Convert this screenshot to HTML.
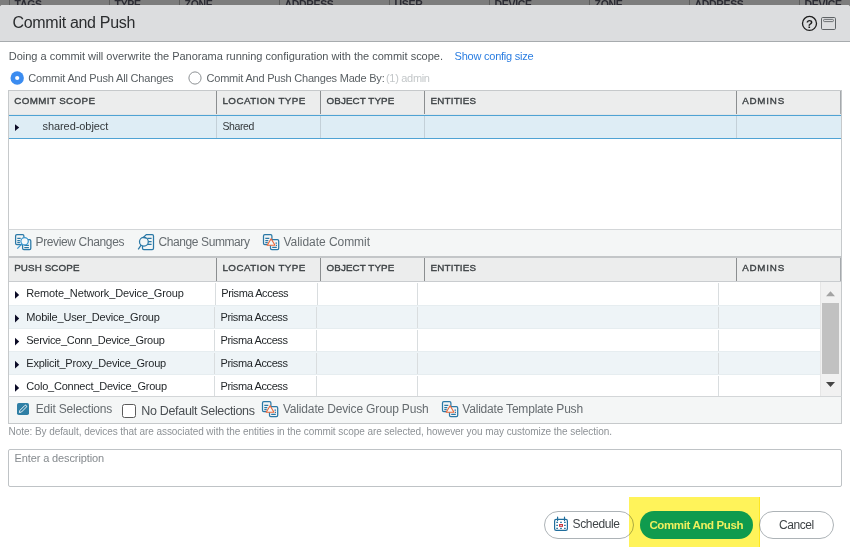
<!DOCTYPE html>
<html><head><meta charset="utf-8">
<style>
*{box-sizing:border-box;margin:0;padding:0}
html,body{width:850px;height:551px;overflow:hidden;background:#7d7d7d;font-family:"Liberation Sans",sans-serif}
body{position:relative}
.a{position:absolute}
.x{position:absolute;white-space:nowrap;line-height:1}
#bg span{position:absolute;top:-.6px;font-size:10.5px;line-height:1;font-weight:bold;letter-spacing:-.35px;color:#2b2b33;margin-left:-.4px}
#bg i{position:absolute;top:0;width:1px;height:5px;background:#5c5c5c}
.hs{position:absolute;width:1px;height:23px;background:#8b8e90}
.vs{position:absolute;width:1px;background:#d9dddf}
.tri{position:absolute;width:0;height:0;border-left:4px solid #0c0c28;border-top:3.8px solid transparent;border-bottom:3.8px solid transparent}
</style></head><body>
<div id="bg">
<i style="left:9px"></i><span style="left:15px">TAGS</span>
<i style="left:109px"></i><span style="left:115px">TYPE</span>
<i style="left:179px"></i><span style="left:185px">ZONE</span>
<i style="left:279px"></i><span style="left:285px">ADDRESS</span>
<i style="left:389px"></i><span style="left:395px">USER</span>
<i style="left:489px"></i><span style="left:495px">DEVICE</span>
<i style="left:589px"></i><span style="left:595px">ZONE</span>
<i style="left:689px"></i><span style="left:695px">ADDRESS</span>
<i style="left:799px"></i><span style="left:805px">DEVICE</span>
</div>
<!-- dialog -->
<div class="a" style="left:0;top:5px;width:850px;height:546px;background:#fff;border-radius:3px 3px 0 0"></div>
<div class="a" style="left:0;top:5px;width:850px;height:37px;background:#dcdddf;border-bottom:1px solid #a7abae;border-radius:3px 3px 0 0"></div>
<!-- header icons -->
<svg class="a" style="left:798px;top:12px" width="44" height="24" viewBox="798 12 44 24">
 <circle cx="809.5" cy="23.4" r="7" fill="none" stroke="#1c1c1c" stroke-width="1.3"/>
 <text x="809.5" y="27.6" font-size="11.5" font-weight="bold" font-family="Liberation Sans, sans-serif" text-anchor="middle" fill="#1c1c1c">?</text>
 <rect x="821.5" y="17.5" width="14" height="12" rx="1.2" fill="none" stroke="#5f6366" stroke-width="1"/>
 <rect x="823.6" y="19.4" width="9.8" height="2.2" rx=".8" fill="none" stroke="#5f6366" stroke-width=".9"/>
</svg>
<!-- radios -->
<svg class="a" style="left:10px;top:71px" width="14" height="14"><circle cx="7.2" cy="7" r="6.7" fill="#3b8cf0"/><circle cx="7.2" cy="7" r="2.1" fill="#fff"/></svg>
<svg class="a" style="left:188px;top:71px" width="14" height="14"><circle cx="7" cy="7" r="6.1" fill="#fff" stroke="#8d9194" stroke-width="1"/></svg>

<!-- commit grid -->
<div class="a" style="left:8px;top:90px;width:834px;height:140px;border:1px solid #c6c9cb;border-bottom:0;background:#fff"></div>
<div class="a" style="left:9px;top:91px;width:832px;height:23px;background:#eceded"></div>
<div class="hs" style="left:216px;top:91px"></div><div class="hs" style="left:320px;top:91px"></div><div class="hs" style="left:424px;top:91px"></div><div class="hs" style="left:736px;top:91px"></div><div class="hs" style="left:840px;top:91px;background:#a5a9ad"></div>
<div class="a" style="left:9px;top:114px;width:832px;height:1px;background:#e3e6e7"></div>
<div class="a" style="left:9px;top:115px;width:832px;height:24px;background:#deedf5;border-top:1px solid #4fa3d4;border-bottom:1px solid #4fa3d4"></div>
<div class="vs" style="left:216px;top:116px;height:22px;background:#c3d0d8"></div><div class="vs" style="left:320px;top:116px;height:22px;background:#c3d0d8"></div><div class="vs" style="left:424px;top:116px;height:22px;background:#c3d0d8"></div><div class="vs" style="left:736px;top:116px;height:22px;background:#c3d0d8"></div>

<!-- toolbar 1 -->
<div class="a" style="left:8px;top:229px;width:834px;height:27px;background:#f4f6f6;border:1px solid #c6c9cb;border-top-color:#d3d6d8;border-bottom:0"></div>


<!-- push grid -->
<div class="a" style="left:8px;top:256px;width:834px;height:141px;border:1px solid #c6c9cb;border-top:2px solid #c3c6c8;background:#fff"></div>
<div class="a" style="left:9px;top:258px;width:832px;height:23px;background:#eceded"></div>
<div class="a" style="left:9px;top:281px;width:832px;height:1px;background:#c9cccf"></div>
<div class="hs" style="left:216px;top:258px;height:23px"></div><div class="hs" style="left:320px;top:258px;height:23px"></div><div class="hs" style="left:424px;top:258px;height:23px"></div><div class="hs" style="left:736px;top:258px;height:23px"></div><div class="hs" style="left:840px;top:258px;height:23px;background:#a5a9ad"></div>
<!-- rows -->
<div class="a" style="left:9px;top:305px;width:811px;height:24px;background:#eef4f7;border-top:1px solid #e6edf0;border-bottom:1px solid #e6edf0"></div>
<div class="a" style="left:9px;top:351px;width:811px;height:24px;background:#eef4f7;border-top:1px solid #e6edf0;border-bottom:1px solid #e6edf0"></div>
<div class="vs" style="left:215px;top:283px;height:22px"></div><div class="vs" style="left:317px;top:283px;height:22px"></div><div class="vs" style="left:417px;top:283px;height:22px"></div><div class="vs" style="left:718px;top:283px;height:22px"></div><div class="vs" style="left:214px;top:307px;height:21px"></div><div class="vs" style="left:316px;top:307px;height:21px"></div><div class="vs" style="left:417px;top:307px;height:21px"></div><div class="vs" style="left:718px;top:307px;height:21px"></div><div class="vs" style="left:214px;top:330px;height:21px"></div><div class="vs" style="left:316px;top:330px;height:21px"></div><div class="vs" style="left:417px;top:330px;height:21px"></div><div class="vs" style="left:718px;top:330px;height:21px"></div><div class="vs" style="left:214px;top:353px;height:21px"></div><div class="vs" style="left:316px;top:353px;height:21px"></div><div class="vs" style="left:417px;top:353px;height:21px"></div><div class="vs" style="left:718px;top:353px;height:21px"></div><div class="vs" style="left:214px;top:376px;height:20px"></div><div class="vs" style="left:316px;top:376px;height:20px"></div><div class="vs" style="left:417px;top:376px;height:20px"></div><div class="vs" style="left:718px;top:376px;height:20px"></div>
<!-- scrollbar -->
<div class="a" style="left:820px;top:282px;width:21px;height:114px;background:#f1f1f1;border-left:1px solid #e6e6e6"></div>
<div class="a" style="left:822px;top:303px;width:17px;height:71px;background:#c1c1c1"></div>

<!-- toolbar 2 -->
<div class="a" style="left:8px;top:396px;width:834px;height:28px;background:#f4f6f6;border:1px solid #c6c9cb;border-top-color:#d3d6d8"></div>
<div class="a" style="left:122px;top:404px;width:14px;height:14px;border:1px solid #5a5a5a;border-radius:2.5px;background:#fff"></div>
<!--ICONS2-->

<!-- textarea -->
<div class="a" style="left:8px;top:449px;width:834px;height:38px;border:1px solid #bfc3c6;border-radius:2px;background:#fff"></div>

<!-- buttons -->
<div class="a" style="left:544px;top:511px;width:90px;height:28px;border:1px solid #adb3b7;border-radius:14px;background:#fff"></div>
<div class="a" style="left:629px;top:497px;width:131px;height:50px;background:#fff35a;mix-blend-mode:multiply"></div>
<div class="a" style="left:640px;top:511px;width:113px;height:28px;border-radius:14px;background:#0f9b4e"></div>
<div class="a" style="left:759px;top:511px;width:75px;height:28px;border:1px solid #adb3b7;border-radius:14px;background:#fff"></div>
<div class="a" style="left:759px;top:497px;width:1px;height:50px;background:#fff35a;mix-blend-mode:multiply"></div>
<svg class="a" style="left:0;top:0" width="850" height="551" viewBox="0 0 850 551">
<g fill="none" stroke="#2a78a6" stroke-width="1.25">
 <rect x="15.6" y="234.6" width="8.3" height="10" rx="1.3"/>
 <path d="M17.3 238.4h3.4M17.3 240.5h2.6M17.3 242.5h2.6"/>
 <rect x="22.6" y="239.6" width="8.2" height="10" rx="1.3"/>
 <path d="M24.3 245.4h4.6M24.3 247.5h4.6"/>
 <circle cx="24.6" cy="241.2" r="3.7" fill="#f6f9fa" stroke="#3c98cf"/>
 <path d="M21.9 243.9L17.3 248.6" stroke="#3c98cf"/>
</g>
<g fill="none" stroke="#2a78a6" stroke-width="1.25">
 <path d="M146.3 234.6H152.2Q153.5 234.6 153.5 235.9V248.3Q153.5 249.6 152.2 249.6H143.8Q142.5 249.6 142.5 248.3V238.2Z"/>
 <path d="M147.2 238.4h4.4M148.3 241.5h3.3M147.2 244.4h4.4"/>
 <circle cx="143.9" cy="241.7" r="4.4" fill="#f4f6f6"/>
 <path d="M141.1 245.2L138.2 249.4"/>
 <path d="M142.6 237.6L146.3 238.2" stroke-width=".9"/>
</g>
<g fill="none" stroke="#2a78a6" stroke-width="1.25">
 <rect x="263.5" y="234.6" width="8.4" height="10" rx="1.3"/>
 <path d="M265.3 238.3h4M265.3 240.5h3M265.3 242.6h2.4"/>
 <rect x="270.5" y="239.6" width="8.2" height="10" rx="1.3"/>
 <path d="M275.5 243.2h1.5M276 245.3h1M272.2 247.4h4.6"/>
 <path d="M271.1 238.7L275 245.2H267.2Z" fill="#f3f8f9" stroke="#e9693d" stroke-width="1.15" stroke-linejoin="round"/>
</g>
<g transform="translate(-1,167)" fill="none" stroke="#2a78a6" stroke-width="1.25">
 <rect x="263.5" y="234.6" width="8.4" height="10" rx="1.3"/>
 <path d="M265.3 238.3h4M265.3 240.5h3M265.3 242.6h2.4"/>
 <rect x="270.5" y="239.6" width="8.2" height="10" rx="1.3"/>
 <path d="M275.5 243.2h1.5M276 245.3h1M272.2 247.4h4.6"/>
 <path d="M271.1 238.7L275 245.2H267.2Z" fill="#f3f8f9" stroke="#e9693d" stroke-width="1.15" stroke-linejoin="round"/>
</g>
<g transform="translate(179,167)" fill="none" stroke="#2a78a6" stroke-width="1.25">
 <rect x="263.5" y="234.6" width="8.4" height="10" rx="1.3"/>
 <path d="M265.3 238.3h4M265.3 240.5h3M265.3 242.6h2.4"/>
 <rect x="270.5" y="239.6" width="8.2" height="10" rx="1.3"/>
 <path d="M275.5 243.2h1.5M276 245.3h1M272.2 247.4h4.6"/>
 <path d="M271.1 238.7L275 245.2H267.2Z" fill="#f3f8f9" stroke="#e9693d" stroke-width="1.15" stroke-linejoin="round"/>
</g>
<path d="M15 124.3L19.2 127.6L15 130.9Z" fill="#0b0b26"/>
<path d="M15 291.0L19.2 294.9L15 298.8Z" fill="#0b0b26"/>
<path d="M15 314.6L19.2 318.5L15 322.4Z" fill="#0b0b26"/>
<path d="M15 337.7L19.2 341.6L15 345.5Z" fill="#0b0b26"/>
<path d="M15 360.8L19.2 364.7L15 368.6Z" fill="#0b0b26"/>
<path d="M15 384.0L19.2 387.9L15 391.8Z" fill="#0b0b26"/>
<path d="M826 296.3L830.5 291.3L835 296.3Z" fill="#a3a3a3"/>
<path d="M826 382.1L830.5 387.1L835 382.1Z" fill="#454545"/>
<!-- edit icon -->
<rect x="17" y="403" width="12" height="12" rx="1.8" fill="#2f7fa5"/>
<path d="M19.4 412.5L19.9 410.4L24.9 405.4Q25.6 404.9 26.3 405.6Q27 406.3 26.4 407L21.5 412Z" fill="none" stroke="#fff" stroke-width=".9" stroke-linejoin="round"/>
<!-- calendar -->
<g fill="none" stroke="#1f6d9c" stroke-width="1.2">
 <rect x="554.6" y="519.4" width="12.8" height="11" rx="1.6"/>
 <path d="M557.6 517.2v3.4M564.5 517.2v3.4" stroke-linecap="round"/>
 <path d="M556.3 522.4h1.6M560.2 522.4h1.6M564.1 522.4h1.6M556.3 525.4h1.6M564.1 525.4h1.6M556.3 528.4h1.6M560.2 528.4h1.6M564.1 528.4h1.6" stroke-width="1.1"/>
 <rect x="559.6" y="524.55" width="2.9" height="1.75" stroke="#c8323a" stroke-width="1.05" fill="#fff"/>
</g>
</svg>
<div id="title" class="x" style="left:12.50px;top:15.00px;font-size:16px;font-weight:normal;color:#2b2d2f;letter-spacing:-0.305px">Commit and Push</div>
<div id="l1" class="x" style="left:8.80px;top:50.71px;font-size:11px;font-weight:normal;color:#4f5559;letter-spacing:-0.013px">Doing a commit will overwrite the Panorama running configuration with the commit scope.</div>
<div id="l1b" class="x" style="left:454.60px;top:50.71px;font-size:11px;font-weight:normal;color:#2a7de1;letter-spacing:-0.236px">Show config size</div>
<div id="r1" class="x" style="left:28.30px;top:72.80px;font-size:11px;font-weight:normal;color:#5a6064;letter-spacing:-0.174px">Commit And Push All Changes</div>
<div id="r2" class="x" style="left:206.50px;top:72.80px;font-size:11px;font-weight:normal;color:#5a6064;letter-spacing:-0.208px">Commit And Push Changes Made By:</div>
<div id="r2b" class="x" style="left:386.00px;top:72.80px;font-size:11px;font-weight:normal;color:#c3c7c9;letter-spacing:-0.309px">(1) admin</div>
<div id="h1" class="x" style="left:14.20px;top:95.91px;font-size:9.8px;font-weight:normal;color:#3d4245;letter-spacing:0.384px;-webkit-text-stroke:.36px #3d4245">COMMIT SCOPE</div>
<div id="h2" class="x" style="left:222.40px;top:95.91px;font-size:9.8px;font-weight:normal;color:#3d4245;letter-spacing:0.458px;-webkit-text-stroke:.36px #3d4245">LOCATION TYPE</div>
<div id="h3" class="x" style="left:326.50px;top:95.91px;font-size:9.8px;font-weight:normal;color:#3d4245;letter-spacing:0.119px;-webkit-text-stroke:.36px #3d4245">OBJECT TYPE</div>
<div id="h4" class="x" style="left:430.60px;top:95.91px;font-size:9.8px;font-weight:normal;color:#3d4245;letter-spacing:0.187px;-webkit-text-stroke:.36px #3d4245">ENTITIES</div>
<div id="h5" class="x" style="left:742.20px;top:95.91px;font-size:9.8px;font-weight:normal;color:#3d4245;letter-spacing:0.778px;-webkit-text-stroke:.36px #3d4245">ADMINS</div>
<div id="c1" class="x" style="left:42.50px;top:120.91px;font-size:11px;font-weight:normal;color:#33383b;letter-spacing:-0.071px">shared-object</div>
<div id="c2" class="x" style="left:222.40px;top:120.91px;font-size:10.5px;font-weight:normal;color:#33383b;letter-spacing:-0.392px">Shared</div>
<div id="tb1" class="x" style="left:35.50px;top:235.61px;font-size:12px;font-weight:normal;color:#666c70;letter-spacing:-0.362px">Preview Changes</div>
<div id="tb2" class="x" style="left:158.60px;top:235.61px;font-size:12px;font-weight:normal;color:#666c70;letter-spacing:-0.417px">Change Summary</div>
<div id="tb3" class="x" style="left:283.50px;top:235.61px;font-size:12px;font-weight:normal;color:#666c70;letter-spacing:-0.046px">Validate Commit</div>
<div id="p1" class="x" style="left:14.20px;top:263.01px;font-size:9.8px;font-weight:normal;color:#3d4245;letter-spacing:0.117px;-webkit-text-stroke:.36px #3d4245">PUSH SCOPE</div>
<div id="p2" class="x" style="left:222.40px;top:263.01px;font-size:9.8px;font-weight:normal;color:#3d4245;letter-spacing:0.458px;-webkit-text-stroke:.36px #3d4245">LOCATION TYPE</div>
<div id="p3" class="x" style="left:326.50px;top:263.01px;font-size:9.8px;font-weight:normal;color:#3d4245;letter-spacing:0.119px;-webkit-text-stroke:.36px #3d4245">OBJECT TYPE</div>
<div id="p4" class="x" style="left:430.60px;top:263.01px;font-size:9.8px;font-weight:normal;color:#3d4245;letter-spacing:0.187px;-webkit-text-stroke:.36px #3d4245">ENTITIES</div>
<div id="p5" class="x" style="left:742.20px;top:263.01px;font-size:9.8px;font-weight:normal;color:#3d4245;letter-spacing:0.778px;-webkit-text-stroke:.36px #3d4245">ADMINS</div>
<div id="n1" class="x" style="left:26.30px;top:287.50px;font-size:11px;font-weight:normal;color:#1f2326;letter-spacing:-0.151px">Remote_Network_Device_Group</div>
<div id="n2" class="x" style="left:26.30px;top:312.21px;font-size:11px;font-weight:normal;color:#1f2326;letter-spacing:-0.199px">Mobile_User_Device_Group</div>
<div id="n3" class="x" style="left:26.30px;top:335.30px;font-size:11px;font-weight:normal;color:#1f2326;letter-spacing:-0.289px">Service_Conn_Device_Group</div>
<div id="n4" class="x" style="left:26.30px;top:357.50px;font-size:11px;font-weight:normal;color:#1f2326;letter-spacing:-0.216px">Explicit_Proxy_Device_Group</div>
<div id="n5" class="x" style="left:26.30px;top:380.71px;font-size:11px;font-weight:normal;color:#1f2326;letter-spacing:-0.223px">Colo_Connect_Device_Group</div>
<div id="a1" class="x" style="left:221.30px;top:287.50px;font-size:11px;font-weight:normal;color:#1f2326;letter-spacing:-0.403px">Prisma Access</div>
<div id="a2" class="x" style="left:220.50px;top:312.21px;font-size:11px;font-weight:normal;color:#1f2326;letter-spacing:-0.387px">Prisma Access</div>
<div id="a3" class="x" style="left:220.50px;top:335.30px;font-size:11px;font-weight:normal;color:#1f2326;letter-spacing:-0.387px">Prisma Access</div>
<div id="a4" class="x" style="left:220.50px;top:357.50px;font-size:11px;font-weight:normal;color:#1f2326;letter-spacing:-0.387px">Prisma Access</div>
<div id="a5" class="x" style="left:220.50px;top:380.71px;font-size:11px;font-weight:normal;color:#1f2326;letter-spacing:-0.387px">Prisma Access</div>
<div id="e1" class="x" style="left:35.80px;top:402.61px;font-size:12px;font-weight:normal;color:#666c70;letter-spacing:-0.206px">Edit Selections</div>
<div id="e2" class="x" style="left:141.30px;top:405.21px;font-size:12.5px;font-weight:normal;color:#4a4f53;letter-spacing:-0.325px">No Default Selections</div>
<div id="e3" class="x" style="left:282.90px;top:402.80px;font-size:12px;font-weight:normal;color:#666c70;letter-spacing:-0.162px">Validate Device Group Push</div>
<div id="e4" class="x" style="left:462.30px;top:402.80px;font-size:12px;font-weight:normal;color:#666c70;letter-spacing:-0.199px">Validate Template Push</div>
<div id="note" class="x" style="left:8.60px;top:427.30px;font-size:10px;font-weight:normal;color:#8d9296;letter-spacing:-0.063px">Note: By default, devices that are associated with the entities in the commit scope are selected, however you may customize the selection.</div>
<div id="ph" class="x" style="left:14.50px;top:453.21px;font-size:11px;font-weight:normal;color:#858a8e;letter-spacing:-0.118px">Enter a description</div>
<div id="b1" class="x" style="left:572.60px;top:518.30px;font-size:12px;font-weight:normal;color:#3f4447;letter-spacing:-0.378px">Schedule</div>
<div id="b2" class="x" style="left:649.40px;top:519.80px;font-size:11.5px;font-weight:bold;color:#eff05e;letter-spacing:-0.361px">Commit And Push</div>
<div id="b3" class="x" style="left:779.00px;top:518.91px;font-size:12.0px;font-weight:normal;color:#3f4447;letter-spacing:-0.432px">Cancel</div>
</body></html>
